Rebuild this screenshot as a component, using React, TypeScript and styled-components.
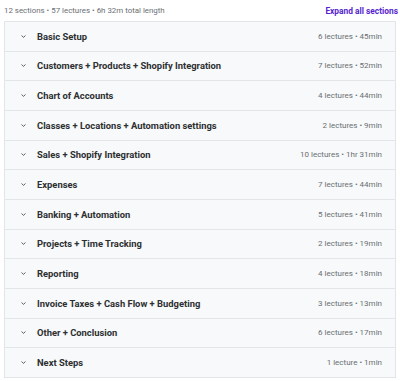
import React, { FC } from "react";
import styled, { createGlobalStyle } from "styled-components";

const GlobalStyle = createGlobalStyle`
  html, body {
    margin: 0;
    padding: 0;
    background: #ffffff;
  }
  body {
    font-family: Roboto, "Liberation Sans", sans-serif;
    color: #2d2f31;
  }
`;

const sections = [
  { title: "Basic Setup", meta: "6 lectures • 45min" },
  { title: "Customers + Products + Shopify Integration", meta: "7 lectures • 52min" },
  { title: "Chart of Accounts", meta: "4 lectures • 44min" },
  { title: "Classes + Locations + Automation settings", meta: "2 lectures • 9min" },
  { title: "Sales + Shopify Integration", meta: "10 lectures • 1hr 31min" },
  { title: "Expenses", meta: "7 lectures • 44min" },
  { title: "Banking + Automation", meta: "5 lectures • 41min" },
  { title: "Projects + Time Tracking", meta: "2 lectures • 19min" },
  { title: "Reporting", meta: "4 lectures • 18min" },
  { title: "Invoice Taxes + Cash Flow + Budgeting", meta: "3 lectures • 13min" },
  { title: "Other + Conclusion", meta: "6 lectures • 17min" },
  { title: "Next Steps", meta: "1 lecture • 1min" },
];

const Page = styled.div`
  width: 400px;
  padding: 0 4px 0 4px;
  box-sizing: border-box;
`;

const Summary = styled.div`
  display: flex;
  align-items: center;
  justify-content: space-between;
  height: 21px;
  margin-right: -2px;
`;

const SummaryText = styled.span`
  font-size: 7.9px;
  color: #6a6f73;
`;

const ExpandLink = styled.span`
  font-size: 8.4px;
  font-weight: 700;
  color: #5624d0;
`;

const Curriculum = styled.div`
  border: 1px solid #e3e6e9;
  border-bottom: none;
`;

const Row = styled.div`
  display: flex;
  align-items: center;
  height: 28.67px;
  padding: 0 13px 0 15px;
  background: #f7f9fa;
  border-bottom: 1px solid #e3e6e9;
`;

const Chevron = styled.svg`
  width: 7px;
  height: 7px;
  flex: none;
  margin-right: 10px;
`;

const Title = styled.span`
  flex: 1;
  font-size: 9.4px;
  font-weight: 700;
  color: #2d2f31;
  white-space: nowrap;
`;

const Meta = styled.span`
  font-size: 8px;
  color: #6a6f73;
  white-space: nowrap;
`;

const SectionRow: FC<{ title: string; meta: string }> = ({ title, meta }) => (
  <Row>
    <Chevron viewBox="0 0 10 10">
      <path d="M2.6 4 L5 6.2 L7.4 4" fill="none" stroke="#3e4143" strokeWidth="1.2" strokeLinecap="round" strokeLinejoin="round" />
    </Chevron>
    <Title>{title}</Title>
    <Meta>{meta}</Meta>
  </Row>
);

const App: FC = () => (
  <>
    <GlobalStyle />
    <Page>
      <Summary>
        <SummaryText>12 sections • 57 lectures • 6h 32m total length</SummaryText>
        <ExpandLink>Expand all sections</ExpandLink>
      </Summary>
      <Curriculum>
        {sections.map((s) => (
          <SectionRow key={s.title} title={s.title} meta={s.meta} />
        ))}
      </Curriculum>
    </Page>
  </>
);

export default App;
